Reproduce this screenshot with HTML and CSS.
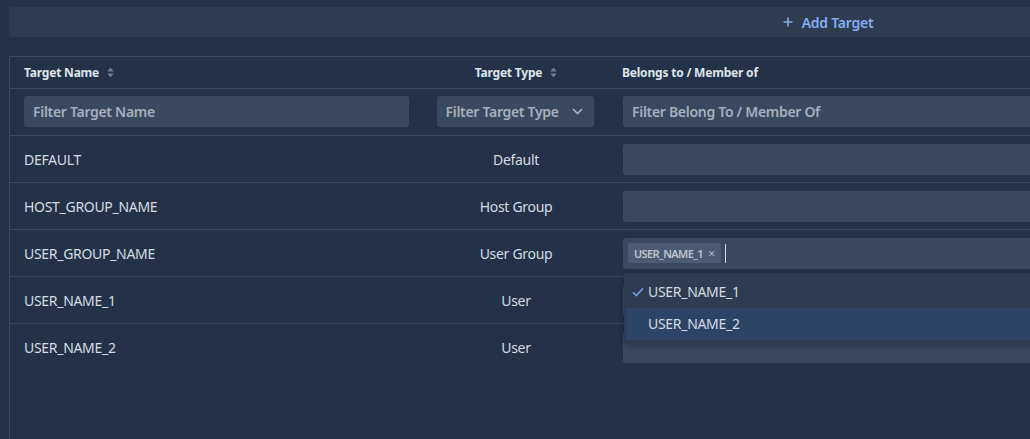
FILE: index.html
```html
<!DOCTYPE html>
<html lang="en">
<head>
<meta charset="utf-8">
<title>Targets</title>
<link rel="stylesheet" href="styles.css">
</head>
<body>
<div class="page">
  <div class="topbar">
    <button class="add-btn" type="button">
      <svg class="plus" width="10" height="10" viewBox="0 0 10 10"><path d="M5 0.5V9.5M0.5 5H9.5" stroke="currentColor" stroke-width="1.6" fill="none"/></svg>
      <span>Add Target</span>
    </button>
  </div>

  <div class="table">
    <div class="row head">
      <div class="cell c1"><span>Target Name</span><svg class="sort" width="7" height="11" viewBox="0 0 7 11"><path d="M3.5 0.5L6.8 4.6H0.2Z M3.5 10.5L6.8 6.4H0.2Z" fill="#6c7a8e"/></svg></div>
      <div class="cell c2"><span>Target Type</span><svg class="sort" width="7" height="11" viewBox="0 0 7 11"><path d="M3.5 0.5L6.8 4.6H0.2Z M3.5 10.5L6.8 6.4H0.2Z" fill="#6c7a8e"/></svg></div>
      <div class="cell c3"><span>Belongs to / Member of</span></div>
    </div>

    <div class="row filters">
      <div class="cell c1"><div class="input name-input placeholder">Filter Target Name</div></div>
      <div class="cell c2"><div class="input select placeholder"><span>Filter Target Type</span><svg width="11" height="7" viewBox="0 0 11 7"><path d="M1 1L5.5 5.5L10 1" stroke="#a9b3c1" stroke-width="1.6" fill="none"/></svg></div></div>
      <div class="cell c3"><div class="input wide placeholder">Filter Belong To / Member Of</div></div>
    </div>

    <div class="row">
      <div class="cell c1">DEFAULT</div>
      <div class="cell c2">Default</div>
      <div class="cell c3"><div class="input wide"></div></div>
    </div>
    <div class="row">
      <div class="cell c1">HOST_GROUP_NAME</div>
      <div class="cell c2">Host Group</div>
      <div class="cell c3"><div class="input wide"></div></div>
    </div>
    <div class="row">
      <div class="cell c1">USER_GROUP_NAME</div>
      <div class="cell c2">User Group</div>
      <div class="cell c3 anchor">
        <div class="input wide multi">
          <span class="chip">USER_NAME_1 <span class="chip-x">×</span></span>
          <span class="caret"></span>
        </div>
        <div class="dropdown">
          <div class="opt selected"><svg class="check" width="12" height="10" viewBox="0 0 12 10"><path d="M1 5.2L4.3 8.5L11 1.2" stroke="#6ea1e6" stroke-width="1.6" fill="none"/></svg>USER_NAME_1</div>
          <div class="opt active">USER_NAME_2</div>
        </div>
      </div>
    </div>
    <div class="row">
      <div class="cell c1">USER_NAME_1</div>
      <div class="cell c2">User</div>
      <div class="cell c3"><div class="input wide"></div></div>
    </div>
    <div class="row">
      <div class="cell c1">USER_NAME_2</div>
      <div class="cell c2">User</div>
      <div class="cell c3"><div class="input wide"></div></div>
    </div>
  </div>
</div>
</body>
</html>
```

FILE: styles.css
```css
html, body {
  margin: 0;
  padding: 0;
  overflow: hidden;
  background: #233248;
  height: 100%;
}
body {
  font-family: "Noto Sans", "Open Sans", "Liberation Sans", sans-serif;
  color: #d4dbe4;
  font-size: 14px;
}
.page {
  width: 1660px;
  padding: 7px 0 0 9px;
}
.topbar {
  height: 30px;
  width: 1636px;
  background: #2e3c52;
  border-radius: 3px;
  display: flex;
  align-items: center;
  justify-content: center;
}
.add-btn {
  background: none;
  border: 0;
  padding: 0;
  display: flex;
  align-items: center;
  gap: 9px;
  color: #84aeee;
  font-family: inherit;
  font-size: 14px;
  font-weight: 600;
  letter-spacing: -0.25px;
  margin-left: 2px;
}
.plus { color: #7ea8ea; }

.table {
  margin-top: 19px;
  border-top: 1px solid #3b4a60;
  border-left: 1px solid #3b4a60;
  height: 400px;
}
.row {
  display: grid;
  grid-template-columns: 413px 186px 1fr;
  height: 46px;
  border-bottom: 1px solid #3a4960;
  align-items: center;
}
.row:last-child { border-bottom: 0; }
.row.head {
  height: 31px;
  font-size: 12px;
  font-weight: 700;
  color: #dfe4eb;
}
.row.filters { align-items: start; padding-top: 7px; height: 39px; }
.cell {
  padding: 0 14px;
  display: flex;
  align-items: center;
  letter-spacing: -0.3px;
}
.head .cell { letter-spacing: -0.2px; }
.c2 { justify-content: center; }
.head .c3 { padding-left: 13px; }
.sort { margin-left: 8px; }

.input {
  height: 31px;
  background: #394a60;
  border-radius: 3px;
  box-sizing: border-box;
  display: flex;
  align-items: center;
  padding: 0 9px;
}
.placeholder {
  color: #a4afbe;
  font-weight: 600;
  letter-spacing: -0.3px;
}
.name-input { width: 385px; }
.select {
  width: 157px;
  justify-content: space-between;
  padding: 0 11px 0 9px;
}
.filters .c2 { padding-left: 13px; padding-right: 15px; }
.wide { width: 100%; }
.c3 { padding-right: 0; }

.anchor { position: relative; }
.multi { padding: 0 5px; gap: 4px; }
.chip {
  height: 20px;
  background: #4b5b73;
  border-radius: 2px;
  color: #bac4d1;
  font-size: 11px;
  letter-spacing: -0.6px;
  display: flex;
  align-items: center;
  padding: 0 6px;
  gap: 5px;
  font-weight: 600;
}
.chip-x { font-size: 13px; letter-spacing: 0; color: #aab4c2; font-weight: 400; }
.caret {
  width: 1px;
  height: 19px;
  background: #d2d9e2;
}
.dropdown {
  position: absolute;
  top: calc(100% + 4px);
  left: 15px;
  right: 0;
  background: #2e3c51;
  border-radius: 3px;
  padding: 3px 0 4px 2px;
  box-shadow: 0 2px 6px rgba(10, 18, 30, 0.35);
  z-index: 5;
}
.opt {
  height: 32px;
  display: flex;
  align-items: center;
  padding-left: 22px;
  position: relative;
  color: #d3dae3;
  letter-spacing: -0.3px;
}
.opt.active { background: #2c4567; }
.check {
  position: absolute;
  left: 6px;
  top: 11px;
}
```
